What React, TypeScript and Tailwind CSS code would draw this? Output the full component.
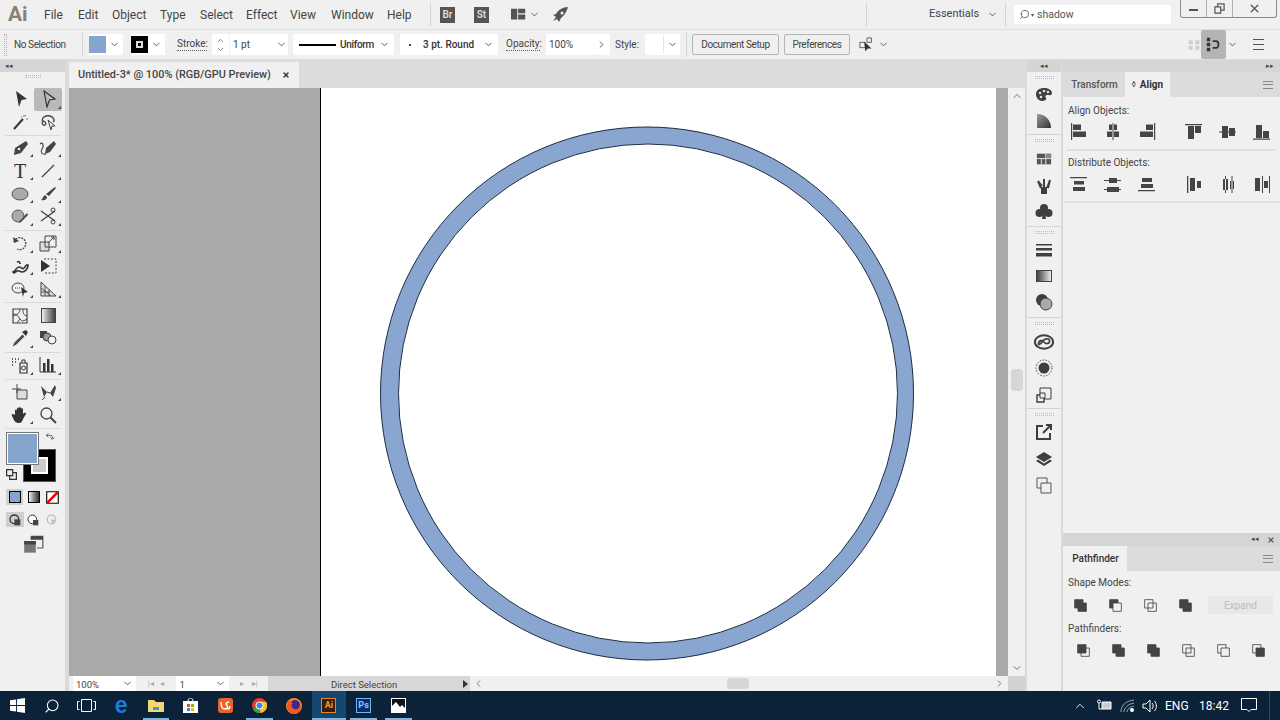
import type { ReactNode } from "react"
import { ChevronDown, ChevronUp, ChevronLeft, ChevronRight, X, Search } from "lucide-react"

const D = "#454545"

function Ico({ size = 18, children }: { size?: number; children: ReactNode }) {
  return (
    <svg width={size} height={size} viewBox="0 0 18 18" fill="none" className="block shrink-0">
      {children}
    </svg>
  )
}

function Chev({ className = "" }: { className?: string }) {
  return <ChevronDown size={11} strokeWidth={2} className={"text-[#555] " + className} />
}

function MenuBar() {
  const items = [
    ["File", "w-[34px]"],
    ["Edit", "w-[34px]"],
    ["Object", "w-[48px]"],
    ["Type", "w-[40px]"],
    ["Select", "w-[46px]"],
    ["Effect", "w-[44px]"],
    ["View", "w-[41px]"],
    ["Window", "w-[56px]"],
    ["Help", "w-[43px]"],
  ]
  return (
    <div className="flex h-[29px] shrink-0 items-center bg-[#f0f0f0] text-[12px] text-[#444]">
      <div className="ml-[8px] w-[36px] text-[21px] font-bold leading-none text-[#8b7f72]">Ai</div>
      {items.map(([t, w]) => (
        <div key={t} className={w}>{t}</div>
      ))}
      <div className="h-[23px] w-px bg-[#d4d4d4]" />
      <div className="ml-[9px] flex h-[16px] w-[15px] items-center justify-center bg-[#555] text-[10px] font-semibold text-[#ddd]">Br</div>
      <div className="ml-[19px] flex h-[16px] w-[15px] items-center justify-center bg-[#555] text-[10px] font-semibold text-[#ddd]">St</div>
      <div className="ml-[22px]">
        <Ico size={16}>
          <path d="M0 2h7v12H0z M8 2h8v5H8z M8 8.500h8V14H8z" fill="#555" />
        </Ico>
      </div>
      <Chev className="ml-[2px]" />
      <div className="ml-[11px]">
        <Ico>
          <path d="M17 1C12 1 7 4 5 8l-3 1 3 2-3 4 4-2 2 3 2-4c3-2 6-7 7-11z" fill="#555" />
          <circle cx="11" cy="7" r="1.500" fill="#f0f0f0" />
        </Ico>
      </div>
      <div className="ml-[297px] h-[23px] w-px bg-[#d4d4d4]" />
      <div className="ml-[62px] w-[46px] whitespace-nowrap text-[11px] text-[#444]">Essentials</div>
      <Chev className="ml-[12px]" />
      <div className="ml-[7px] h-[23px] w-px bg-[#d4d4d4]" />
      <div className="ml-[8px] flex h-[19px] w-[157px] items-center rounded-[2px] bg-white text-[10.500px] text-[#555]">
        <Search size={11} strokeWidth={1.600} className="ml-[5px] -scale-x-100 text-[#444]" />
        <span className="ml-[1px] text-[6px] leading-none">▾</span>
        <span className="ml-[3px]">shadow</span>
      </div>
      <div className="mb-[12px] ml-[9px] flex h-[18px] w-[97px] items-center rounded-b-[3px] border border-t-0 border-[#8a8a8a] text-[#555]">
        <div className="flex h-full w-[26px] items-center justify-center border-r border-[#b0b0b0] pt-[4px]">
          <div className="h-[2px] w-[9px] bg-[#555]" />
        </div>
        <div className="flex h-full w-[26px] items-center justify-center border-r border-[#b0b0b0]">
          <Ico size={11}>
            <path d="M1.500 6.500h9.500v10H1.500z M6 6.500V1.500h10.500v10H11" stroke="#555" strokeWidth="2" />
          </Ico>
        </div>
        <X size={13} strokeWidth={2.400} className="ml-[15px]" />
      </div>
    </div>
  )
}

function ControlBar() {
  return (
    <div className="flex h-[31px] shrink-0 items-center border-y border-[#dedede] bg-[#f0f0f0] text-[10px] text-[#444]">
      <div className="ml-[4px] h-[22px] w-[3px] border-x border-dotted border-[#b5b5b5]" />
      <div className="ml-[7px] w-[68px] tracking-[-0.4px]">No Selection</div>
      <div className="h-[24px] w-px bg-[#d4d4d4]" />
      <div className="ml-[6px] flex h-[21px] w-[34px] items-center bg-white">
        <div className="h-[17px] w-[17px] bg-[#86a5cd]" />
        <Chev className="ml-[3px]" />
      </div>
      <div className="ml-[8px] flex h-[21px] w-[34px] items-center bg-white">
        <div className="flex h-[17px] w-[17px] items-center justify-center bg-black">
          <div className="h-[7px] w-[7px] border-2 border-[#ddd]" />
        </div>
        <Chev className="ml-[3px]" />
      </div>
      <div className="ml-[12px] w-[30px] border-b border-dotted border-[#666] leading-[12px]">Stroke:</div>
      <div className="ml-[5px] flex h-[21px] w-[17px] flex-col items-center justify-center bg-white">
        <ChevronUp size={9} strokeWidth={2} className="text-[#555]" />
        <ChevronDown size={9} strokeWidth={2} className="text-[#555]" />
      </div>
      <div className="ml-px flex h-[21px] w-[58px] items-center bg-white pl-[3px]">
        <span className="w-[40px]">1 pt</span>
        <Chev className="ml-[3px]" />
      </div>
      <div className="ml-[5px] flex h-[21px] w-[101px] items-center bg-white font-medium text-[#333]">
        <div className="ml-[6px] h-[2px] w-[37px] bg-black" />
        <span className="ml-[4px] w-[37px] tracking-[-0.3px]">Uniform</span>
        <Chev className="ml-[2px]" />
      </div>
      <div className="ml-[6px] flex h-[21px] w-[98px] items-center bg-white font-medium text-[#333]">
        <div className="ml-[9px] h-[2px] w-[2px] rounded-full bg-black" />
        <span className="ml-[12px] w-[55px] whitespace-nowrap">3 pt. Round</span>
        <Chev className="ml-[5px]" />
      </div>
      <div className="ml-[8px] w-[34px] border-b border-dotted border-[#666] leading-[12px]">Opacity:</div>
      <div className="ml-[6px] flex h-[21px] w-[46px] items-center bg-white pl-[3px]">100%</div>
      <div className="flex h-[21px] w-[18px] items-center justify-center bg-white">
        <ChevronRight size={11} strokeWidth={2} className="text-[#555]" />
      </div>
      <div className="ml-[5px] w-[24px]">Style:</div>
      <div className="ml-[6px] flex h-[21px] w-[35px] items-center bg-white">
        <div className="h-[17px] w-[19px] border-r border-[#e4e4e4] bg-white" />
        <Chev className="ml-[3px]" />
      </div>
      <div className="ml-[6px] h-[24px] w-px bg-[#d4d4d4]" />
      <div className="ml-[5px] flex h-[21px] w-[87px] items-center justify-center rounded-[2px] border border-[#b5b5b5] tracking-[-0.4px] text-[#444]">Document Setup</div>
      <div className="ml-[5px] flex h-[21px] w-[66px] items-center justify-center rounded-[2px] border border-[#b5b5b5] tracking-[-0.4px] text-[#444]">Preferences</div>
      <div className="ml-[9px]">
        <Ico size={16}>
          <path d="M1 6h6v6H1z M9 1h5v5H9z" stroke="#555" />
          <path d="M6 5l1 11 3-3 4 0z" fill="#333" />
        </Ico>
      </div>
      <Chev className="ml-[3px]" />
      <div className="ml-[299px]">
        <Ico size={12}>
          <path d="M1 2h6v6H1z M11 2h6v6h-6z M1 10h6v6H1z M11 10h6v6h-6z" fill="#cfcfcf" />
        </Ico>
      </div>
      <div className="ml-[1px] flex h-[29px] w-[25px] items-center justify-center rounded-[2px] bg-[#b4b4b4]">
        <Ico size={15}>
          <path d="M1 1h4v4H1z M1 7h4v4H1z M1 13h4v4H1z" fill="#333" />
          <path d="M8 5h4c4 0 4 8 0 8H8" stroke="#333" strokeWidth="2" />
        </Ico>
      </div>
      <Chev className="ml-[1px]" />
      <div className="ml-[15px] flex h-[11px] w-[11px] flex-col justify-between">
        <div className="h-px bg-[#555]" />
        <div className="h-px bg-[#555]" />
        <div className="h-px bg-[#555]" />
      </div>
    </div>
  )
}

function Tool({ children, more, active }: { children: ReactNode; more?: boolean; active?: boolean }) {
  return (
    <div className={"relative flex h-[22.800px] w-[28px] items-center justify-center rounded-[2px] " + (active ? "bg-[#b9b9b9]" : "")}>
      {children}
      {more && <div className="absolute bottom-[2px] right-[1px] h-0 w-0 border-b-[3px] border-l-[3px] border-b-[#444] border-l-transparent" />}
    </div>
  )
}

function ToolRow({ a, b }: { a: ReactNode; b: ReactNode }) {
  return <div className="flex pl-[6px]">{a}{b}</div>
}

function Sep({ tight }: { tight?: boolean }) {
  return <div className={"mx-[5px] mb-[1px] h-px w-[56px] bg-[#d9d9d9] " + (tight ? "mt-[1px]" : "mt-[2px]")} />
}

function LeftToolbar() {
  return (
    <div className="flex w-[69px] shrink-0 flex-col border-r-[4px] border-[#dadada] bg-[#f0f0f0]">
      <div className="flex h-[12px] items-center bg-[#d5d5d5] pl-[5px] text-[7px] leading-none text-[#444]">◂◂</div>
      <div className="mx-auto mt-[3px] h-[3px] w-[16px] border-x-0 border-y border-dotted border-[#bbb]" />
      <div className="mt-[10px]" />
      <ToolRow
        a={<Tool><Ico><path d="M5 1l11 8-5.500 1L8 17z" fill="#333" /></Ico></Tool>}
        b={<Tool active more><Ico><path d="M5 1l11 8-5.500 1L8 17z" stroke="#333" strokeWidth="1.200" /></Ico></Tool>}
      />
      <ToolRow
        a={<Tool><Ico><path d="M3 16L12 6" stroke="#333" strokeWidth="2" /><path d="M13 2v2M10 4h1M15 6h2M15 2l-1 1" stroke="#777" /></Ico></Tool>}
        b={<Tool><Ico><path d="M3 8c0-4 4-6 8-5s5 5 3 6M4 8c-2 2 0 5 2 4s0-4-2-4" stroke="#444" strokeWidth="1.300" /><path d="M9 7l7 6-3 0-1 4z" stroke="#444" fill="#f0f0f0" /></Ico></Tool>}
      />
      <Sep tight />
      <ToolRow
        a={<Tool more><Ico><path d="M15 2l2 3-7 9-7 2 1-7z" fill="#444" /><circle cx="8" cy="10" r="1.300" fill="#f0f0f0" /></Ico></Tool>}
        b={<Tool more><Ico><path d="M15 2l2 3-6 8-5 2 1-6z" fill="#444" /><path d="M1 5c3-3 4 2 2 5s0 6 4 5" stroke="#444" strokeWidth="1.200" /></Ico></Tool>}
      />
      <ToolRow
        a={<Tool more><span className="font-['Liberation_Serif',serif] text-[20px] leading-none text-[#333]">T</span></Tool>}
        b={<Tool more><Ico><path d="M3 15L15 3" stroke="#444" strokeWidth="1.300" /></Ico></Tool>}
      />
      <ToolRow
        a={<Tool more><Ico><ellipse cx="9" cy="9" rx="8" ry="6" fill="#aaa" stroke="#555" /></Ico></Tool>}
        b={<Tool more><Ico><path d="M16 2l1 1-7 8-3-2z" fill="#444" /><path d="M6 10c-2 1-2 4-4 5 4 1 6-1 6-3z" fill="#444" /></Ico></Tool>}
      />
      <ToolRow
        a={<Tool more><Ico><circle cx="7" cy="9" r="6" fill="#aaa" stroke="#555" /><path d="M8 15l8-9 1 2-8 8z" fill="#444" /></Ico></Tool>}
        b={<Tool more><Ico><path d="M2 4l14 10M2 14L16 4" stroke="#444" strokeWidth="1.400" /><circle cx="14" cy="3" r="2" stroke="#444" /><circle cx="14" cy="15" r="2" stroke="#444" /></Ico></Tool>}
      />
      <Sep />
      <ToolRow
        a={<Tool more><Ico><path d="M3 8a6 6 0 1 1 3 7" stroke="#444" strokeWidth="1.300" strokeDasharray="2 1" /><path d="M2 3l1 6 5-2z" fill="#444" /></Ico></Tool>}
        b={<Tool more><Ico><path d="M1 8h9v9H1z" stroke="#444" fill="#ddd" /><path d="M6 2h11v11H6z" stroke="#444" /><path d="M9 9l6-6M12 3h3v3" stroke="#444" /></Ico></Tool>}
      />
      <ToolRow
        a={<Tool more><Ico><path d="M2 15c3-1 3-5 6-5s3 3 5 1 2-4 4-3c0 4-3 7-6 7-2 0-3-2-5-1l-3 2zM6 5c2-1 3 0 3 2" stroke="#333" strokeWidth="1.600" /></Ico></Tool>}
        b={<Tool><Ico><path d="M2 3l9 6-9 6z" fill="#333" /><path d="M5 2h12v14H5" stroke="#444" strokeDasharray="2 1.500" /></Ico></Tool>}
      />
      <ToolRow
        a={<Tool more><Ico><ellipse cx="7" cy="8" rx="6" ry="5" stroke="#444" /><path d="M4 8h5" stroke="#444" strokeDasharray="1 1" /><path d="M10 7l7 5-4 1-1 4z" fill="#333" /></Ico></Tool>}
        b={<Tool more><Ico><path d="M2 2v14h15L2 2z" fill="#ddd" stroke="#444" /><path d="M6 6v10M10 10v6M2 8l10 8M2 12h9" stroke="#555" /></Ico></Tool>}
      />
      <Sep />
      <ToolRow
        a={<Tool><Ico><path d="M2 2h14v14H2z" stroke="#444" strokeWidth="1.200" /><path d="M2 7c4 0 5 2 7 5s4 2 7 0M9 2c0 4-3 6-7 7M9 12l-3 4M12 2c0 4 0 6 4 7" stroke="#444" /></Ico></Tool>}
        b={<Tool><div className="h-[15px] w-[15px] border border-[#444] bg-gradient-to-r from-[#eee] to-[#444]" /></Tool>}
      />
      <ToolRow
        a={<Tool more><Ico><path d="M12 6L4 14l-1 2 2-1 8-8" stroke="#444" strokeWidth="1.300" /><path d="M11 3l4 4 1-2c2-2-1-5-3-3z" fill="#333" /></Ico></Tool>}
        b={<Tool><Ico><path d="M1 2h7v7H1z" fill="#444" /><circle cx="8" cy="8" r="4" fill="#999" stroke="#444" /><circle cx="13" cy="11" r="4" fill="#f0f0f0" stroke="#444" /></Ico></Tool>}
      />
      <Sep />
      <ToolRow
        a={<Tool more><Ico><path d="M1 3h1M4 3h1M7 3h1M1 6h1M4 6h1M1 9h1" stroke="#333" strokeWidth="1.600" /><path d="M9 7h7v10H9z" stroke="#333" strokeWidth="1.200" /><circle cx="12.500" cy="12" r="2" stroke="#333" /><path d="M11 7V4h3v3" stroke="#333" /></Ico></Tool>}
        b={<Tool more><Ico><path d="M1 1v15h16" stroke="#333" /><path d="M4 7h2.500v9H4z M8 3h2.500v13H8z M12 8h2.500v8H12z" fill="#333" /></Ico></Tool>}
      />
      <Sep />
      <ToolRow
        a={<Tool><Ico><path d="M6 7h10v9H6z" fill="#ddd" stroke="#444" /><path d="M1 6h9M6 1v9" stroke="#444" /></Ico></Tool>}
        b={<Tool more><Ico><path d="M2 3l6 6-3 5zM16 2l-5 8 3 4 3-9z" fill="#444" /><path d="M8 9l3 1M6 14l-3 3" stroke="#444" /></Ico></Tool>}
      />
      <ToolRow
        a={<Tool more><Ico><path d="M4 9V5c0-2 2-2 2 0V3c0-2 2-2 2 0v-1c0-1 2-1 2 0v1c0-1 2-1 2 0v5c1-1 3-2 3 0l-3 5c-1 3-2 4-4 4-3 0-4-1-5-3L1 10c-1-2 1-3 3-1z" fill="#333" /></Ico></Tool>}
        b={<Tool><Ico><circle cx="7.500" cy="7.500" r="5.500" stroke="#444" strokeWidth="1.300" /><path d="M11.500 11.500L17 17" stroke="#444" strokeWidth="2" /></Ico></Tool>}
      />
      <Sep />
      <div className="relative ml-[6px] mt-[2px] h-[50px] w-[50px]">
        <div className="absolute left-[17px] top-[17px] flex h-[33px] w-[33px] items-center justify-center border border-[#555] bg-black">
          <div className="h-[17px] w-[17px] border-2 border-white bg-[#ccc]" />
        </div>
        <div className="absolute left-0 top-0 h-[33px] w-[33px] border border-[#777] bg-[#86a5cd] shadow-[inset_0_0_0_1px_#fff]" />
        <div className="absolute left-[39px] top-0">
          <Ico size={12}><path d="M2 5h7c1 0 2 1 2 2v3M2 5l3-3M2 5l3 3M11 11l-3-3M11 11l3-3" stroke="#444" strokeWidth="1.200" /></Ico>
        </div>
        <div className="absolute left-0 top-[37px]">
          <Ico size={11}><path d="M6 6h11v11H6z" stroke="#333" strokeWidth="2" /><path d="M1 1h10v10H1z" fill="#eee" stroke="#333" strokeWidth="2" /></Ico>
        </div>
      </div>
      <div className="ml-[6px] mt-[7px] flex items-center">
        <div className="flex h-[16px] w-[17px] items-center justify-center bg-[#d0d0d0]"><div className="h-[12px] w-[12px] border border-black bg-[#86a5cd]" /></div>
        <div className="ml-[2px] flex h-[16px] w-[17px] items-center justify-center"><div className="h-[12px] w-[12px] border border-black bg-gradient-to-r from-[#eee] to-[#333]" /></div>
        <div className="ml-[2px] flex h-[16px] w-[17px] items-center justify-center">
          <Ico size={13}><path d="M1 1h16v16H1z" fill="#fff" stroke="#000" strokeWidth="1.500" /><path d="M2 16L16 2" stroke="#e00" strokeWidth="3.500" /></Ico>
        </div>
      </div>
      <div className="ml-[6px] mt-[7px] flex items-center">
        <div className="flex h-[15px] w-[18px] items-center justify-center bg-[#cfcfcf]">
          <Ico size={12}><circle cx="8" cy="8" r="6.500" stroke="#333" strokeWidth="2" /><path d="M8 8h9v9H8z" fill="#444" /></Ico>
        </div>
        <div className="flex h-[15px] w-[18px] items-center justify-center">
          <Ico size={12}><circle cx="8" cy="8" r="6.500" stroke="#333" fill="#fff" strokeWidth="1.500" /><path d="M9 9h8v8H9z" fill="#444" /></Ico>
        </div>
        <div className="flex h-[15px] w-[18px] items-center justify-center">
          <Ico size={11}><circle cx="9" cy="9" r="7" stroke="#bbb" strokeWidth="2" /><path d="M9 9h5v5H9z" fill="#bbb" /></Ico>
        </div>
      </div>
      <div className="ml-[23px] mt-[7px]">
        <Ico size={21}><path d="M1 6h10v10H1z" fill="#777" /><path d="M7 2h10v10H12" fill="none" stroke="#555" /><path d="M7 2h10v3H7z M1 6h10v3H1z" fill="#444" /><path d="M7 2v3" stroke="#444" /></Ico>
      </div>
    </div>
  )
}

function Canvas() {
  return (
    <div className="flex h-[588px] shrink-0">
      <div className="w-[251px] bg-[#a9a9a9]" />
      <div className="w-px bg-black" />
      <div className="w-[675px] overflow-hidden bg-white">
        <svg width="536" height="536" viewBox="0 0 536 536" className="ml-[58px] mt-[38px] block">
          <circle cx="268" cy="267.500" r="266.500" fill="#88a6cf" stroke="#202c42" strokeWidth="1" />
          <circle cx="269" cy="267.500" r="249.500" fill="#fff" stroke="#202c42" strokeWidth="1" />
        </svg>
      </div>
      <div className="w-[12px] bg-[#a9a9a9]" />
      <div className="flex w-[17px] flex-col items-center bg-[#f0f0f0]">
        <ChevronUp size={12} strokeWidth={2} className="mt-[2px] text-[#777]" />
        <div className="mt-[267px] h-[22px] w-[12px] rounded-[4px] bg-[#d6d6d6]" />
        <ChevronDown size={12} strokeWidth={2} className="mt-[271px] text-[#777]" />
      </div>
    </div>
  )
}

function StatusBar() {
  return (
    <div className="flex h-[15px] shrink-0 items-center bg-[#f0f0f0] text-[9.500px] leading-none text-[#444]">
      <div className="ml-[4px] flex h-[15px] w-[47px] items-center bg-white pl-[3px] pt-[2px]">100%</div>
      <div className="flex h-[15px] w-[16px] items-center justify-center bg-white"><Chev /></div>
      <div className="flex h-[15px] w-[40px] items-center justify-center gap-[6px] text-[#aaa]">
        <span className="text-[8px]">|◂</span><span className="text-[8px]">◂</span>
      </div>
      <div className="flex h-[15px] w-[37px] items-center bg-white pl-[4px] pt-[2px]">1</div>
      <div className="flex h-[15px] w-[17px] items-center justify-center bg-white"><Chev /></div>
      <div className="flex h-[15px] w-[39px] items-center justify-center gap-[8px] text-[#aaa]">
        <span className="text-[8px]">▸</span><span className="text-[8px]">▸|</span>
      </div>
      <div className="flex h-[15px] w-[203px] items-center bg-[#d7d7d7] pl-[63px]">
        <span className="w-[132px] pt-[2px]">Direct Selection</span>
        <div className="h-0 w-0 border-y-[4px] border-l-[5px] border-y-transparent border-l-[#333]" />
      </div>
      <ChevronLeft size={11} strokeWidth={2} className="ml-[3px] text-[#777]" />
      <div className="ml-[243px] h-[11px] w-[22px] rounded-[4px] bg-[#d6d6d6]" />
      <ChevronRight size={11} strokeWidth={2} className="ml-[245px] text-[#777]" />
      <div className="ml-[3px] h-[15px] w-[17px] bg-[#d2d2d2]" />
    </div>
  )
}

function Center() {
  return (
    <div className="flex w-[956px] shrink-0 flex-col">
      <div className="flex h-[28px] shrink-0 items-end bg-[#dcdcdc]">
        <div className="flex h-[26px] w-[230px] items-center bg-[#f0f0f0] pl-[9px] text-[10.900px] font-medium text-[#444]">
          <span className="w-[204px] whitespace-nowrap">Untitled-3* @ 100% (RGB/GPU Preview)</span>
          <X size={8} strokeWidth={4} className="text-[#333]" />
        </div>
      </div>
      <Canvas />
      <StatusBar />
    </div>
  )
}

function Grip() {
  return <div className="mx-auto h-[3px] w-[19px] shrink-0 border-y border-dotted border-[#bbb]" />
}

function DockGroup({ h, last, gap, children }: { h: string; last?: boolean; gap: string; children: ReactNode }) {
  return (
    <div className={"flex flex-col items-center pt-[4px] " + h + " " + (last ? "" : "border-b border-[#d5d5d5]")}>
      <Grip />
      <div className={gap} />
      {children}
    </div>
  )
}

function DockIcon({ children }: { children: ReactNode }) {
  return <div className="flex h-[26.500px] items-center justify-center">{children}</div>
}

function Dock() {
  return (
    <div className="flex w-[38px] shrink-0 flex-col border-x-[2px] border-[#dadada] bg-[#f0f0f0]">
      <div className="flex h-[12px] shrink-0 items-center justify-center bg-[#d5d5d5] text-[7px] leading-none text-[#444]">◂◂</div>
      <DockGroup h="h-[63px]" gap="mt-[2px]">
        <DockIcon><Ico><path d="M1 9c0-4 4-6 8-6s8 2 8 5-3 2-5 2-2 2-1 3-1 3-4 3-6-3-6-7z" fill="#3f3f3f" /><circle cx="5" cy="8" r="1.300" fill="#ddd" /><circle cx="9" cy="6" r="1.300" fill="#ddd" /><circle cx="13" cy="7" r="1.300" fill="#ddd" /><circle cx="6" cy="12" r="1.300" fill="#ddd" /></Ico></DockIcon>
        <DockIcon><svg width="16" height="16" viewBox="0 0 16 16" className="block"><defs><linearGradient id="ck" x1="0" x2="1" y1="0" y2="1"><stop offset="0" stopColor="#999" /><stop offset="1" stopColor="#333" /></linearGradient></defs><path d="M1 1c8 0 14 6 14 14H1z" fill="url(#ck)" /></svg></DockIcon>
      </DockGroup>
      <DockGroup h="h-[92px]" gap="mt-[4px]">
        <DockIcon><Ico size={16}><path d="M1 3h16v12H1z" fill="#555" /><path d="M1 8.500h16M6 8.500V15M11 3v12" stroke="#f0f0f0" strokeWidth="1" /><path d="M11.500 3.500H17V8h-5.500z" fill="#888" /></Ico></DockIcon>
        <DockIcon><Ico><path d="M6 10h6v7H6z" fill="#3f3f3f" /><path d="M6 11L3 4l4 5M9 10V2M12 11l3-8-2 8" stroke="#3f3f3f" strokeWidth="2" /></Ico></DockIcon>
        <DockIcon><Ico><circle cx="9" cy="5" r="4" fill="#3f3f3f" /><circle cx="4.500" cy="10" r="4" fill="#3f3f3f" /><circle cx="13.500" cy="10" r="4" fill="#3f3f3f" /><path d="M8 9h2l1 7H7z" fill="#3f3f3f" /></Ico></DockIcon>
      </DockGroup>
      <DockGroup h="h-[91px]" gap="mt-[2px]">
        <DockIcon><Ico><path d="M1 4h16v1.500H1z M1 8h16v2.500H1z M1 13h16v3.500H1z" fill="#3f3f3f" /></Ico></DockIcon>
        <DockIcon><div className="h-[12px] w-[16px] border border-[#444] bg-gradient-to-r from-[#444] to-[#eee]" /></DockIcon>
        <DockIcon><Ico><circle cx="7" cy="7" r="6" fill="#3f3f3f" /><circle cx="11" cy="11" r="6" fill="#aaa" stroke="#3f3f3f" /></Ico></DockIcon>
      </DockGroup>
      <DockGroup h="h-[91px]" gap="mt-[4px]">
        <DockIcon><Ico size={20}><ellipse cx="9" cy="9" rx="8.200" ry="6" stroke="#3f3f3f" strokeWidth="1.800" /><path d="M4 11c0-4 4-4 5-2s5 2 5-1-5-2-6 0-4 4-4 3z" stroke="#3f3f3f" strokeWidth="1.500" /></Ico></DockIcon>
        <DockIcon><Ico><circle cx="9" cy="9" r="5.500" fill="#3f3f3f" /><circle cx="9" cy="9" r="8" stroke="#3f3f3f" strokeDasharray="1.500 1.500" /></Ico></DockIcon>
        <DockIcon><Ico><path d="M5 2h11v11H5z" stroke="#3f3f3f" /><path d="M2 9h7v7H2z" fill="#f0f0f0" stroke="#3f3f3f" strokeWidth="1.400" /><path d="M5 7h5v5H5z" fill="#f0f0f0" stroke="#3f3f3f" /></Ico></DockIcon>
      </DockGroup>
      <DockGroup h="h-[91px]" last gap="mt-[3px]">
        <DockIcon><Ico><path d="M8 3H2v13h13v-6" stroke="#3f3f3f" strokeWidth="2" /><path d="M8 10l8-8M11 2h5v5" stroke="#3f3f3f" strokeWidth="2" /></Ico></DockIcon>
        <DockIcon><Ico><path d="M9 2l8 5-8 5-8-5z" fill="#3f3f3f" /><path d="M3 9.500l-2 1.500 8 5 8-5-2-1.500-6 4z" fill="#3f3f3f" /></Ico></DockIcon>
        <DockIcon><Ico><path d="M2 2h10v10H2z" stroke="#555" /><path d="M6 7h10v10H6z" fill="#f0f0f0" stroke="#555" /></Ico></DockIcon>
      </DockGroup>
    </div>
  )
}

function Bars({ kind }: { kind: number }) {
  const shapes: Record<number, string> = {
    0: "M1 0v17h1.200V0z M3 1.500h8V7H3z M3 8.500h13V14H3z",
    1: "M8.500 0v17h1V0z M5 1.500h8V7H5z M3 8.500h12V14H3z",
    2: "M16 0v17h1.200V0z M8 1.500h7V7H8z M2 8.500h13V14H2z",
    3: "M0 1h17v1.300H0z M3 3h6v13H3z M10 3h6v7h-6z",
    4: "M0 8.500h17v1H0z M3 3h6v12H3z M10 5h6v8h-6z",
    5: "M0 15.500h17v1.300H0z M3 2h6v13H3z M10 8h6v7h-6z",
    6: "M0 1h17v1.300H0z M4 5h10v3.500H4z M3 11h12v4H3z",
    7: "M0 4h17v1H0z M5 2h8v5H5z M0 13h17v1H0z M3 11h12v5H3z",
    8: "M4 2h10v4H4z M3 8h12v4H3z M0 14h17v1.300H0z",
    9: "M2 0v17h1.300V0z M5 2h5v13H5z M12 5h4v7h-4z",
    10: "M6 0v17h1V0z M4 3h5v11H4z M12.500 0v17h1V0z M11 5h4v8h-4z",
    11: "M16 0v17h1V0z M2 2h5v13H2z M11 5h4v7h-4z M9 0v17h1V0z",
  }
  return <Ico><path d={shapes[kind]} fill={D} /></Ico>
}

function Cell({ children }: { children: ReactNode }) {
  return <div className="flex h-[18px] w-[34px] items-center justify-center">{children}</div>
}

function Menu3() {
  return (
    <div className="flex h-[8px] w-[10px] flex-col justify-between">
      <div className="h-px bg-[#888]" />
      <div className="h-px bg-[#888]" />
      <div className="h-px bg-[#888]" />
    </div>
  )
}

function PathIcon({ back, front }: { back: string; front: string }) {
  return (
    <Ico size={15}>
      <path d="M2 2h10v10H2z" className={back} />
      <path d="M6 6h10v10H6z" className={front} />
    </Ico>
  )
}

function Panels() {
  const solid = "fill-[#444] stroke-[#444]"
  const hollow = "fill-[#f0f0f0] stroke-[#444]"
  const none = "fill-none stroke-[#444]"
  return (
    <div className="flex w-[217px] shrink-0 flex-col bg-[#f0f0f0] text-[10px] text-[#444]">
      <div className="flex h-[12px] shrink-0 items-center justify-end bg-[#d5d5d5] pr-[6px] text-[7px] leading-none text-[#444]">▸▸</div>
      <div className="flex h-[25px] shrink-0 items-stretch bg-[#dcdcdc] text-[10px] font-medium">
        <div className="flex w-[62px] items-center justify-center pl-[1px] text-[#555]">Transform</div>
        <div className="flex w-[45px] items-center justify-center gap-[4px] bg-[#f0f0f0] font-bold text-[#333]">
          <span className="text-[8px] font-normal leading-none">◊</span>Align
        </div>
        <div className="flex flex-1 items-center justify-end pr-[7px]"><Menu3 /></div>
      </div>
      <div className="ml-[5px] mt-[7px] leading-[14px]">Align Objects:</div>
      <div className="ml-[-1px] mt-[5px] flex">
        <Cell><Bars kind={0} /></Cell>
        <Cell><Bars kind={1} /></Cell>
        <Cell><Bars kind={2} /></Cell>
        <div className="w-[13px]" />
        <Cell><Bars kind={3} /></Cell>
        <Cell><Bars kind={4} /></Cell>
        <Cell><Bars kind={5} /></Cell>
      </div>
      <div className="mx-[4px] mt-[8px] h-[2px] bg-[#dedede]" />
      <div className="ml-[5px] mt-[5px] leading-[14px]">Distribute Objects:</div>
      <div className="ml-[-1px] mt-[6px] flex">
        <Cell><Bars kind={6} /></Cell>
        <Cell><Bars kind={7} /></Cell>
        <Cell><Bars kind={8} /></Cell>
        <div className="w-[13px]" />
        <Cell><Bars kind={9} /></Cell>
        <Cell><Bars kind={10} /></Cell>
        <Cell><Bars kind={11} /></Cell>
      </div>
      <div className="mt-[7px] h-[2px] bg-[#e2e2e2]" />
      <div className="h-[330px] shrink-0" />
      <div className="flex h-[13px] shrink-0 items-center justify-end gap-[8px] bg-[#d5d5d5] pr-[5px] text-[7px] leading-none">
        <span>◂◂</span>
        <X size={8} strokeWidth={3.500} className="text-[#555]" />
      </div>
      <div className="flex h-[25px] shrink-0 items-stretch bg-[#dcdcdc] text-[10px] font-medium">
        <div className="flex w-[64px] items-center justify-center bg-[#f0f0f0] pl-[1px] text-[#333]">Pathfinder</div>
        <div className="flex flex-1 items-center justify-end pr-[7px]"><Menu3 /></div>
      </div>
      <div className="ml-[5px] mt-[5px] leading-[14px]">Shape Modes:</div>
      <div className="mt-[6px] flex items-center">
        <div className="flex w-[145px]">
          <div className="flex w-[35px] justify-center"><PathIcon back={solid} front={solid} /></div>
          <div className="flex w-[35px] justify-center"><PathIcon back={solid} front={hollow} /></div>
          <div className="flex w-[35px] justify-center"><PathIcon back={none} front={none} /></div>
          <div className="flex w-[35px] justify-center"><PathIcon back={solid} front={solid} /></div>
        </div>
        <div className="flex h-[18px] w-[65px] items-center justify-center bg-[#e8e8e8] text-[#bbb]">Expand</div>
      </div>
      <div className="ml-[5px] mt-[8px] leading-[14px]">Pathfinders:</div>
      <div className="mt-[7px] flex pl-[3px]">
        <div className="flex w-[35px] justify-center"><PathIcon back={solid} front={none} /></div>
        <div className="flex w-[35px] justify-center"><PathIcon back={solid} front={solid} /></div>
        <div className="flex w-[35px] justify-center"><PathIcon back={solid} front={solid} /></div>
        <div className="flex w-[35px] justify-center"><PathIcon back={hollow} front={none} /></div>
        <div className="flex w-[35px] justify-center"><PathIcon back={none} front={hollow} /></div>
        <div className="flex w-[35px] justify-center"><PathIcon back={hollow} front={solid} /></div>
      </div>
    </div>
  )
}

function TaskIcon({ active, running, children }: { active?: boolean; running?: boolean; children: ReactNode }) {
  return (
    <div className={"relative flex h-full w-[34.640px] shrink-0 items-center justify-center " + (active ? "bg-[#17466f]" : "")}>
      {children}
      {running && <div className={"absolute bottom-0 h-[2px] bg-[#7db4e0] " + (active ? "left-0 right-0" : "left-[4px] right-[4px]")} />}
    </div>
  )
}

function Taskbar() {
  return (
    <div className="flex h-[29px] shrink-0 items-center bg-[#0b2238] text-white">
      <TaskIcon>
        <svg width="15" height="15" viewBox="0 0 16 16" className="block"><path d="M0 2.500l6.500-1v6H0z M7.500 1.300L16 0v7.500H7.500z M0 8.500h6.500v6l-6.500-1z M7.500 8.500H16V16l-8.500-1.300z" fill="#fff" /></svg>
      </TaskIcon>
      <TaskIcon>
        <Search size={16} strokeWidth={1.600} className="-scale-x-100 text-white" />
      </TaskIcon>
      <TaskIcon>
        <svg width="19" height="13" viewBox="0 0 19 13" fill="none" className="block"><path d="M4.500.5h10v12h-10z M2.500 2.500H.5v8h2 M16.500 2.500h2v8h-2" stroke="#fff" /></svg>
      </TaskIcon>
      <TaskIcon>
        <span className="font-['Liberation_Sans',sans-serif] text-[23px] font-bold leading-none text-[#1a7ee0]">e</span>
      </TaskIcon>
      <TaskIcon running>
        <svg width="16" height="14" viewBox="0 0 16 14" className="block"><path d="M0 1h6l2 2h8v10H0z" fill="#f4d774" /><path d="M5 8h6v3H5z" fill="#3a9ad9" /></svg>
      </TaskIcon>
      <TaskIcon>
        <svg width="15" height="15" viewBox="0 0 15 15" className="block"><path d="M0 3h15v12H0z" fill="#fff" /><path d="M5 3c0-4 5-4 5 0" stroke="#fff" fill="none" /><path d="M4 6h3v3H4z" fill="#e74c1c" /><path d="M8 6h3v3H8z" fill="#7cb518" /><path d="M4 10h3v3H4z" fill="#1a8fe0" /><path d="M8 10h3v3H8z" fill="#f6b60c" /></svg>
      </TaskIcon>
      <TaskIcon>
        <div className="flex h-[15px] w-[15px] items-center justify-center rounded-[3px] bg-[#e8642c]">
          <svg width="11" height="11" viewBox="0 0 11 11" fill="none"><path d="M1 2c0 5 1 7 4 7s3-3 1-5M9 2c-2 0-3 1-3 3M7 9c2 0 3-1 3-3" stroke="#fff" strokeWidth="1.400" /></svg>
        </div>
      </TaskIcon>
      <TaskIcon running>
        <svg width="15" height="15" viewBox="0 0 16 16" className="block"><circle cx="8" cy="8" r="8" fill="#e33b2e" /><path d="M8 8L1 12a8 8 0 0 0 8 4z" fill="#2fa44f" /><path d="M8 4h7a8 8 0 0 1-6 12z" fill="#f7c325" /><circle cx="8" cy="8" r="3.800" fill="#3f88e8" stroke="#fff" /></svg>
      </TaskIcon>
      <TaskIcon>
        <svg width="16" height="16" viewBox="0 0 16 16" className="block"><circle cx="8" cy="8" r="8" fill="#f68a1e" /><circle cx="9" cy="7" r="5" fill="#3b2a86" /><path d="M1 8c0-3 1-5 3-6 0 2 1 3 3 3-2 1-2 4 1 6 3 1 6-1 7-4 1 5-3 9-7 9-4 0-7-4-7-8z" fill="#f0572a" /></svg>
      </TaskIcon>
      <TaskIcon active running>
        <div className="flex h-[15px] w-[15px] items-center justify-center border border-[#e8842c] bg-[#3a1f08] text-[9px] font-bold leading-none text-[#f59a3c]">Ai</div>
      </TaskIcon>
      <TaskIcon running>
        <div className="flex h-[15px] w-[15px] items-center justify-center border border-[#6fb7f0] bg-[#0b2a6a] text-[9px] font-bold leading-none text-[#8cc8ff]">Ps</div>
      </TaskIcon>
      <TaskIcon running>
        <svg width="15" height="15" viewBox="0 0 15 15" className="block"><path d="M0 0h15v15H0z" fill="#fff" /><path d="M1 1h13v9l-3-3-2 2-4-5-4 4z" fill="#111" /></svg>
      </TaskIcon>
      <div className="flex-1" />
      <ChevronUp size={14} strokeWidth={1.500} className="text-white" />
      <div className="ml-[10px]">
        <svg width="15" height="13" viewBox="0 0 15 13" fill="none" className="block"><path d="M5 3h9v7H5z" fill="#ccc" stroke="#fff" /><circle cx="2" cy="2.500" r="1.500" stroke="#fff" /><path d="M2 4v6h3" stroke="#fff" /></svg>
      </div>
      <div className="ml-[8px]">
        <svg width="15" height="14" viewBox="0 0 15 14" fill="none" className="block"><path d="M1 13C1 6 6 2 14 1M4 13c0-4 4-8 10-9M7 13c0-3 3-5 7-6" stroke="#9aa7b3" /><circle cx="12" cy="11" r="2" fill="#fff" /></svg>
      </div>
      <div className="ml-[7px]">
        <svg width="16" height="14" viewBox="0 0 16 14" fill="none" className="block"><path d="M1 5h3l4-4v12L4 9H1z" stroke="#fff" /><path d="M10 4c1.500 1.500 1.500 4.500 0 6M12.500 2c2.500 3 2.500 7 0 10" stroke="#fff" /></svg>
      </div>
      <div className="ml-[7px] w-[27px] text-[12px] leading-none">ENG</div>
      <div className="ml-[7px] w-[27px] whitespace-nowrap text-[12px] leading-none">18:42</div>
      <div className="ml-[15px]">
        <svg width="16" height="15" viewBox="0 0 16 15" fill="none" className="block"><path d="M.5.500h15v11H10l-2 2-2-2H.5z" stroke="#fff" /></svg>
      </div>
      <div className="ml-[12px] h-full w-px bg-[#33485c]" />
      <div className="w-[10px]" />
    </div>
  )
}

export default function App() {
  return (
    <div className="flex h-[720px] w-[1280px] flex-col overflow-hidden bg-[#f0f0f0] font-['Roboto',sans-serif]">
      <MenuBar />
      <ControlBar />
      <div className="flex h-[631px] shrink-0">
        <LeftToolbar />
        <Center />
        <Dock />
        <Panels />
      </div>
      <Taskbar />
    </div>
  )
}
